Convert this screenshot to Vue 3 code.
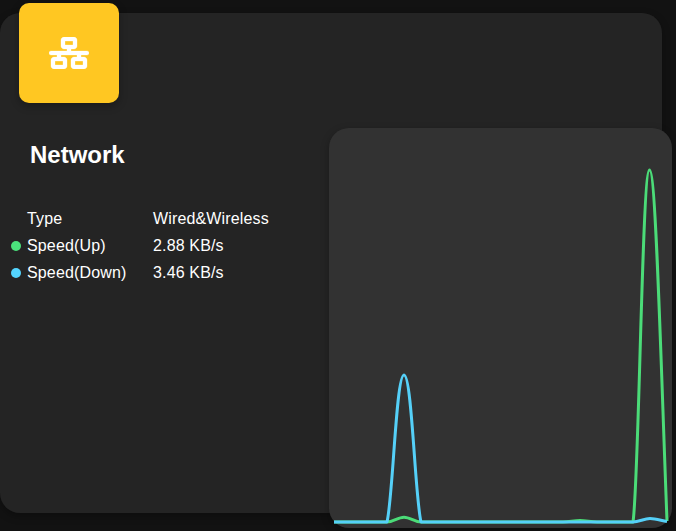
<script setup>
const rows = [
  { label: 'Type', value: 'Wired&Wireless', dot: '' },
  { label: 'Speed(Up)', value: '2.88 KB/s', dot: 'up' },
  { label: 'Speed(Down)', value: '3.46 KB/s', dot: 'down' },
]
</script>

<template>
  <main class="page">
    <section class="card">
      <div class="info">
        <div class="tile">
          <svg class="icon" viewBox="0 0 640 512" aria-hidden="true">
            <path d="M256 64H384v64H256V64zM240 0c-26.5 0-48 21.5-48 48v96c0 26.5 21.5 48 48 48h48v32H32c-17.7 0-32 14.3-32 32s14.3 32 32 32h96v32H80c-26.5 0-48 21.5-48 48v96c0 26.5 21.5 48 48 48H240c26.5 0 48-21.5 48-48V368c0-26.5-21.5-48-48-48H192V288H448v32H400c-26.5 0-48 21.5-48 48v96c0 26.5 21.5 48 48 48H560c26.5 0 48-21.5 48-48V368c0-26.5-21.5-48-48-48H512V288h96c17.7 0 32-14.3 32-32s-14.3-32-32-32H352V192h48c26.5 0 48-21.5 48-48V48c0-26.5-21.5-48-48-48H240zM96 448V384H224v64H96zm320-64H544v64H416V384z" />
          </svg>
        </div>
        <h2 class="title">Network</h2>
        <dl class="stats">
          <div v-for="row in rows" :key="row.label" class="row">
            <span class="dot" :class="row.dot"></span>
            <dt>{{ row.label }}</dt>
            <dd>{{ row.value }}</dd>
          </div>
        </dl>
      </div>
      <div class="chart">
        <svg class="plot" viewBox="0 0 343 400" aria-hidden="true">
          <path class="line up" d="M5 394H58C64 394 69 389.200 75 389.200C81 389.200 86 394 92 394H234C240 394 245 392.500 251 392.500C257 392.500 262 394 268 394H304C310 355 313 42 320.500 42C327 42 332 240 338 393" />
          <path class="line down" d="M5 394H58C64 370 67 247 75 247C83 247 86 370 92 394H304C310 394 315 390.500 321 390.500C327 390.500 332 392.500 338 393.500" />
        </svg>
      </div>
    </section>
  </main>
</template>

<style>
body {
  margin: 0;
  background: #121212;
}
</style>

<style scoped>
.page {
  box-sizing: border-box;
  width: 676px;
  height: 531px;
  padding-top: 13px;
  overflow: hidden;
  background: #121212;
  color: #fff;
  font-family: "Liberation Sans", Arial, sans-serif;
}
.card {
  display: flex;
  width: 662px;
  height: 500px;
  border-radius: 20px;
  background: #242424;
  box-shadow: 0 3px 8px rgba(0, 0, 0, 0.3);
}
.info {
  flex: 0 0 329px;
}
.tile {
  display: flex;
  align-items: center;
  justify-content: center;
  width: 100px;
  height: 100px;
  margin: -10px 0 0 19px;
  border-radius: 10px;
  background: #ffc722;
  box-shadow: 0 3px 8px rgba(0, 0, 0, 0.3);
}
.icon {
  width: 40px;
  height: 32px;
  fill: #fff;
  stroke: #fff;
  stroke-width: 5;
}
.title {
  margin: 38px 0 0 30px;
  font-size: 24px;
  line-height: 28px;
}
.stats {
  margin: 36px 0 0 11px;
}
.row {
  display: grid;
  grid-template-columns: 16px 126px 1fr;
  align-items: center;
  height: 27px;
  font-size: 16px;
  letter-spacing: 0.15px;
}
dt,
dd {
  margin: 0;
}
.dot {
  width: 10px;
  height: 10px;
  border-radius: 50%;
}
.dot.up {
  background: #4be37c;
}
.dot.down {
  background: #54d5ff;
}
.chart {
  flex: 0 0 343px;
  height: 400px;
  margin-top: 115px;
  border-radius: 20px;
  background: #323232;
  box-shadow: 0 3px 8px rgba(0, 0, 0, 0.3);
}
.plot {
  display: block;
  width: 343px;
  height: 400px;
}
.line {
  fill: none;
  stroke-width: 3;
  stroke-linejoin: round;
}
.line.up {
  stroke: #4bdc78;
}
.line.down {
  stroke: #55d0f8;
}
</style>
